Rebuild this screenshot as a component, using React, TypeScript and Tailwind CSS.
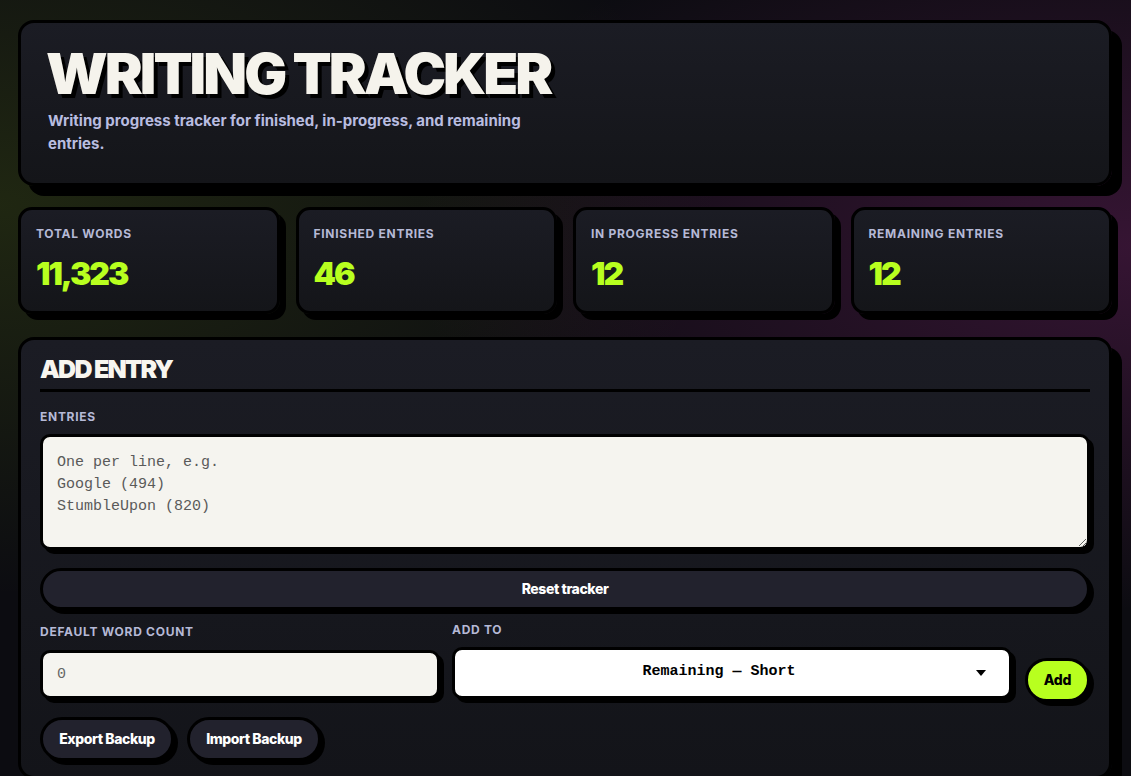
import React from "react";

const stats = [
  { label: "TOTAL WORDS", value: "11,323" },
  { label: "FINISHED ENTRIES", value: "46" },
  { label: "IN PROGRESS ENTRIES", value: "12" },
  { label: "REMAINING ENTRIES", value: "12" },
];

const label = "text-[12px] leading-[1.4] font-bold tracking-[0.06em] text-[#b5b9d6]";
const darkBtn =
  "flex h-[44px] items-center justify-center rounded-full border-[3px] border-black bg-[#22222d] text-[14px] font-extrabold tracking-[-0.03em] text-white shadow-[4px_4px_0_#000]";

export default function App() {
  return (
    <div className="min-h-screen w-full bg-[#0c0c11] bg-[radial-gradient(ellipse_at_0%_25%,rgba(120,160,20,0.18),transparent_45%),radial-gradient(ellipse_at_100%_30%,rgba(150,40,130,0.3),transparent_45%)] font-['Inter',sans-serif] pl-[18px] pr-[19px] pt-[20px] pb-10">
      {/* Header */}
      <div className="rounded-[16px] border-[3px] border-black bg-[linear-gradient(180deg,#1b1c24,#141519)] shadow-[10px_10px_0_#000] pl-[27px] pt-[22px] pb-[28px]">
        <h1 className="-ml-[2px] text-[57px] leading-none font-black tracking-[-0.052em] text-[#f5f3ec] [text-shadow:4px_4px_0_#000]">
          WRITING TRACKER
        </h1>
        <p className="mt-2 max-w-[505px] text-[15px] leading-[1.5] font-bold text-[#b9bde0]">
          Writing progress tracker for finished, in-progress, and remaining entries.
        </p>
      </div>

      {/* Stats */}
      <div className="mt-[21px] grid grid-cols-4 gap-[16px]">
        {stats.map((s) => (
          <div
            key={s.label}
            className="h-[107px] rounded-[14px] border-[3px] border-black bg-[linear-gradient(180deg,#1b1c24,#141519)] shadow-[6px_6px_0_#000] px-[15px] pt-[16px]"
          >
            <div className={label}>{s.label}</div>
            <div className="mt-[15px] text-[32px] leading-none font-black tracking-[-0.065em] text-[#b8ff1f]">
              {s.value}
            </div>
          </div>
        ))}
      </div>

      {/* Add entry panel */}
      <div className="mt-[23px] rounded-[16px] border-[3px] border-black bg-[linear-gradient(180deg,#1b1c24,#131419)] shadow-[10px_10px_0_#000] px-[19px] pt-[14px] pb-[15px]">
        <h2 className="border-b-[3px] border-black pb-[5px] text-[25px] leading-[30px] font-black tracking-[-0.07em] text-[#f7f5ef]">
          ADD ENTRY
        </h2>
        <div className={`mt-[17px] ${label}`}>ENTRIES</div>
        <textarea
          className="mt-[8px] block h-[116px] w-full resize-y rounded-[10px] border-[3px] border-black bg-[#f5f4ef] px-[14px] pt-[15px] pb-[10px] font-['Liberation_Mono',monospace] text-[15px] leading-[22px] text-[#222] placeholder:text-[#5a5a5a] shadow-[4px_4px_0_#000] outline-none"
          placeholder={"One per line, e.g.\nGoogle (494)\nStumbleUpon (820)"}
        />
        <button className="mt-[18px] flex h-[42px] w-full items-center justify-center rounded-full border-[3px] border-black bg-[#22222d] text-[14px] font-extrabold tracking-[-0.03em] text-white shadow-[4px_4px_0_#000]">
          Reset tracker
        </button>

        <div className="mt-[12px] flex items-end gap-[12px]">
          <div className="w-[400px]">
            <div className={label}>DEFAULT WORD COUNT</div>
            <input
              className="mt-[9px] block h-[49px] w-full rounded-[10px] border-[3px] border-black bg-[#f5f4ef] px-[14px] font-['Liberation_Mono',monospace] text-[15px] text-[#222] placeholder:text-[#666] shadow-[4px_4px_0_#000] outline-none"
              placeholder="0"
            />
          </div>
          <div className="flex-1">
            <div className={label}>ADD TO</div>
            <div className="relative mt-[8px] flex h-[52px] w-full items-center justify-center rounded-[10px] border-[3px] border-black bg-white pr-[26px] font-['Liberation_Mono',monospace] text-[15px] font-bold text-black shadow-[4px_4px_0_#000]">
              Remaining — Short
              <svg className="absolute right-[23px] top-[20px]" width="10" height="6" viewBox="0 0 10 6">
                <path d="M0 0H10L5 6Z" fill="#000" />
              </svg>
            </div>
          </div>
          <button className="mb-[-3px] ml-[1px] flex h-[44px] w-[65px] items-center justify-center rounded-full border-[3px] border-black bg-[#b8ff1f] text-[14px] font-extrabold tracking-[-0.02em] text-black shadow-[4px_4px_0_#000]">
            Add
          </button>
        </div>

        <div className="mt-[18px] flex gap-[13px]">
          <button className={`${darkBtn} w-[134px]`}>Export Backup</button>
          <button className={`${darkBtn} w-[134px]`}>Import Backup</button>
        </div>
      </div>
    </div>
  );
}
